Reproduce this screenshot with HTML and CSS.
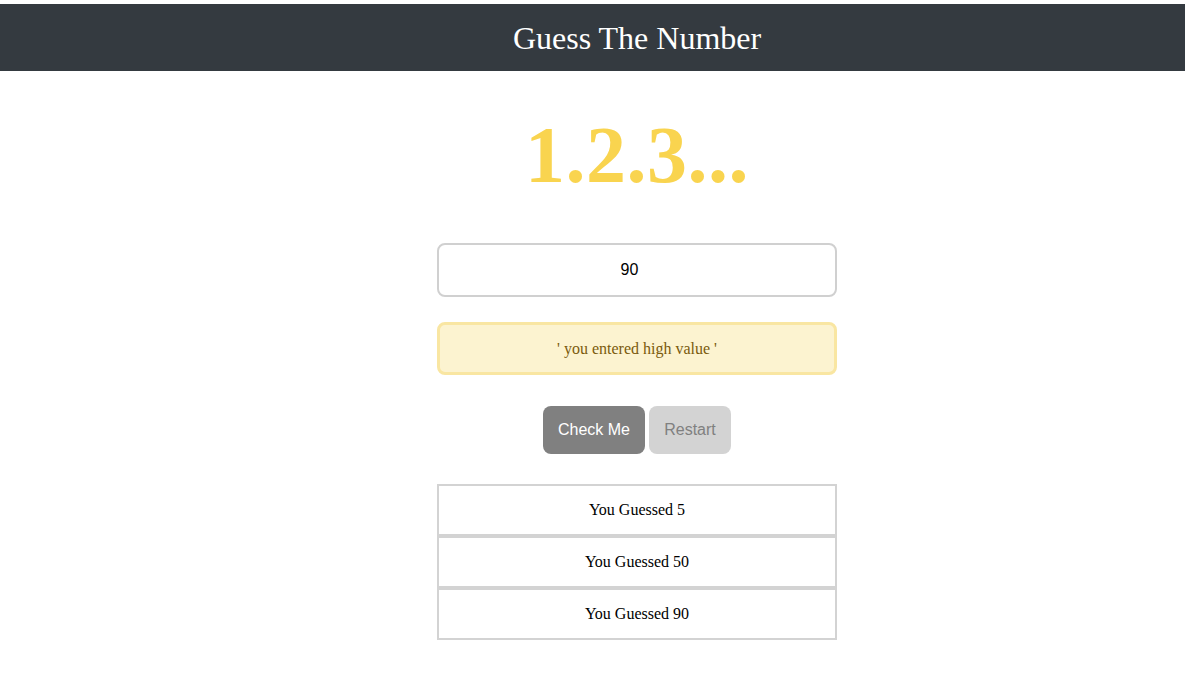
FILE: index.html
```html
<!DOCTYPE html>
<html>
<head>
<meta charset="utf-8">
<link rel="stylesheet" href="styles.css">
</head>
<body>
<header class="topbar">
  <h2 class="topbar-title">Guess The Number</h2>
</header>
<main class="game">
  <h1 class="counter">1.2.3...</h1>
  <input class="guess-input" type="text" value="90">
  <div class="alert">' you entered high value '</div>
  <div class="actions">
    <button class="btn btn-check">Check Me</button>
    <button class="btn btn-restart">Restart</button>
  </div>
  <ul class="guesses">
    <li class="guess">You Guessed 5</li>
    <li class="guess">You Guessed 50</li>
    <li class="guess">You Guessed 90</li>
  </ul>
</main>
</body>
</html>
```
FILE: styles.css
```css
html, body {
  margin: 0;
  padding: 0;
  background: #ffffff;
}
body {
  padding-top: 4px;
  font-family: "Liberation Serif", "Times New Roman", serif;
}
.topbar {
  background: #343a40;
  height: 67px;
  display: flex;
  align-items: center;
  justify-content: center;
  padding-left: 89px;
}
.topbar-title {
  margin: 0;
  color: #ffffff;
  font-size: 32px;
  font-weight: normal;
  line-height: 1;
}
.game {
  display: flex;
  flex-direction: column;
  align-items: center;
  padding-left: 89px;
}
.counter {
  margin: 38px 0 0;
  color: #f9d44f;
  font-size: 80px;
  font-weight: bold;
  line-height: 92px;
  letter-spacing: 0.5px;
}
.guess-input {
  margin-top: 42px;
  box-sizing: border-box;
  width: 400px;
  height: 54px;
  border: 2px solid #d0d0d0;
  border-radius: 8px;
  padding: 0 15px 0 0;
  text-align: center;
  font-family: "Liberation Sans", Arial, sans-serif;
  font-size: 16px;
  color: #000;
  outline: none;
}
.alert {
  margin-top: 25px;
  box-sizing: border-box;
  width: 400px;
  height: 53px;
  border: 3px solid #f9e6a2;
  border-radius: 8px;
  background: #fcf3d0;
  color: #7a5a0c;
  font-size: 16px;
  display: flex;
  align-items: center;
  justify-content: center;
}
.actions {
  margin-top: 31px;
  display: flex;
  gap: 4px;
}
.btn {
  height: 48px;
  border: none;
  border-radius: 8px;
  font-family: "Liberation Sans", Arial, sans-serif;
  font-size: 16px;
  padding: 0;
}
.btn-check {
  width: 102px;
  background: #808080;
  color: #ffffff;
}
.btn-restart {
  width: 82px;
  background: #d3d3d3;
  color: #808080;
}
.guesses {
  list-style: none;
  margin: 30px 0 0;
  padding: 0;
  width: 400px;
}
.guess {
  box-sizing: border-box;
  height: 52px;
  border: 2px solid #d3d3d3;
  display: flex;
  align-items: center;
  justify-content: center;
  font-size: 16px;
  color: #000;
}
```
